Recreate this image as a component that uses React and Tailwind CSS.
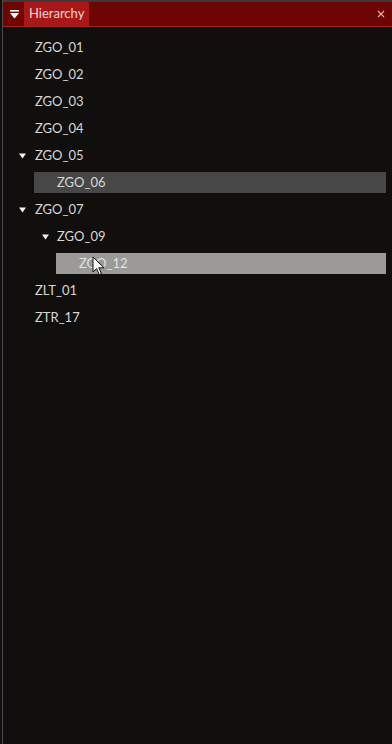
import React from "react";

const ROWS = [
  { name: "ZGO_01", depth: 0 },
  { name: "ZGO_02", depth: 0 },
  { name: "ZGO_03", depth: 0 },
  { name: "ZGO_04", depth: 0 },
  { name: "ZGO_05", depth: 0, open: true },
  { name: "ZGO_06", depth: 1, sel: "dim" },
  { name: "ZGO_07", depth: 0, open: true },
  { name: "ZGO_09", depth: 1, open: true },
  { name: "ZGO_12", depth: 2, sel: "hot", cursor: true },
  { name: "ZLT_01", depth: 0 },
  { name: "ZTR_17", depth: 0 },
];

const INDENT = ["pl-[32px]", "pl-[54px]", "pl-[76px]"];

function Caret() {
  return (
    <svg width="7" height="6" viewBox="0 0 7 6" className="block">
      <path d="M0 0.5h7L3.5 5.5z" fill="#f2f2f2" />
    </svg>
  );
}

function Cursor() {
  return (
    <svg
      width="14"
      height="20"
      viewBox="0 0 14 20"
      className="absolute left-[89px] top-[6px]"
    >
      <path
        d="M1 1v15l3.6-3.4 2.6 6 2.2-1-2.6-5.8H12z"
        fill="#ffffff"
        stroke="#111"
        strokeWidth="1"
        strokeLinejoin="round"
      />
    </svg>
  );
}

function Row({ row }) {
  const bg =
    row.sel === "dim"
      ? "bg-[#474747]"
      : row.sel === "hot"
      ? "bg-[#9b9a99]"
      : "";
  return (
    <div className="relative flex h-[27px] items-center">
      {row.sel && (
        <div
          className={`absolute inset-y-[3px] right-[6px] ${bg} ${
            row.depth === 1 ? "left-[31px]" : "left-[53px]"
          }`}
        />
      )}
      {row.open && (
        <div
          className={`absolute top-[11px] ${
            row.depth === 0 ? "left-[16px]" : "left-[39px]"
          }`}
        >
          <Caret />
        </div>
      )}
      <span
        className={`relative ${INDENT[row.depth]} text-[13px] ${
          row.sel === "hot" ? "text-[#e2e2e2]" : "text-[#d6d6d6]"
        }`}
      >
        {row.name}
      </span>
      {row.cursor && <Cursor />}
    </div>
  );
}

export default function App() {
  return (
    <div
      className="flex h-[744px] w-[392px] bg-[#100f0e]"
      style={{ fontFamily: "Lato, 'Open Sans', sans-serif" }}
    >
      <div className="ml-[2px] w-px bg-[#4a4a4e]" />
      <div className="flex min-w-0 flex-1 flex-col">
        <div className="h-[2px] bg-[#3b3b3b]" />
        <div className="flex h-[25px] items-stretch border-b border-[#a81d1d] bg-[#6d0505] pl-[1px]">
          <div className="flex w-[20px] items-center justify-center">
            <svg width="9" height="9" viewBox="0 0 9 9">
              <rect x="0" y="0" width="9" height="1.6" fill="#fff" />
              <path d="M0 3h9L4.5 8.5z" fill="#fff" />
            </svg>
          </div>
          <div className="flex items-center bg-[#a91818] px-[5px] text-[13px] text-[#f4d2d2]">
            Hierarchy
          </div>
          <div className="flex-1" />
          <div className="flex w-[22px] items-center justify-center">
            <svg width="8" height="8" viewBox="0 0 8 8">
              <path
                d="M1 1l6 6M7 1l-6 6"
                stroke="#e8a6a6"
                strokeWidth="1.2"
              />
            </svg>
          </div>
        </div>
        <div className="pt-[7px]">
          {ROWS.map((r) => (
            <Row key={r.name} row={r} />
          ))}
        </div>
      </div>
    </div>
  );
}
